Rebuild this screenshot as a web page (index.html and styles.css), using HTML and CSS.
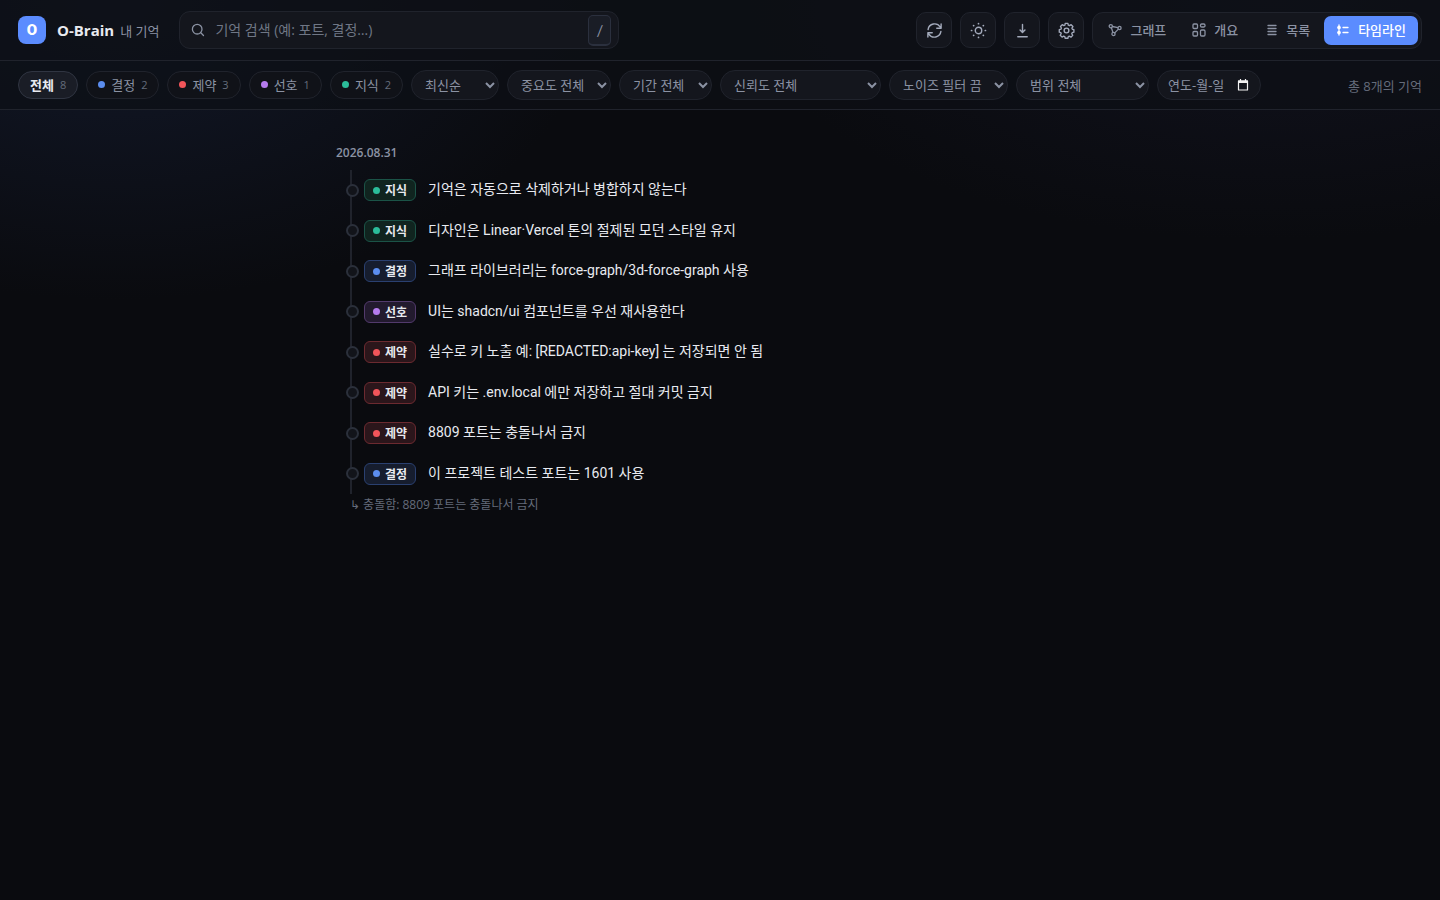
FILE: index.html
```html
<!DOCTYPE html>
<html lang="ko">
<head>
<meta charset="utf-8">
<meta name="viewport" content="width=device-width, initial-scale=1">
<title>O-Brain</title>
<link rel="stylesheet" href="styles.css">
</head>
<body>
<header class="topbar">
  <div class="brand">
    <span class="logo" aria-hidden="true">O</span>
    <h1 class="brand-name">O-Brain</h1>
    <span class="brand-sub">내 기억</span>
  </div>
  <div class="search">
    <svg class="search-icon" viewBox="0 0 14 14" aria-hidden="true"><circle cx="6.2" cy="6.2" r="4.8"/><path d="M9.800 9.800 12.500 12.500"/></svg>
    <input class="search-input" type="search" aria-label="기억 검색" placeholder="기억 검색 (예: 포트, 결정…)">
    <kbd class="key">/</kbd>
  </div>
  <div class="actions">
    <button class="icon-btn" type="button" aria-label="새로고침"><svg viewBox="0 0 18 18"><path d="M2.200 8A7 7 0 0 1 15 5.200L16 6.600M16 2v4.600h-4.600M15.800 10A7 7 0 0 1 3 12.800L2 11.400M2 16v-4.600h4.600"/></svg></button>
    <button class="icon-btn" type="button" aria-label="테마"><svg viewBox="0 0 18 18"><circle cx="9" cy="9" r="3.400"/><path class="dots" d="M9 1.600v.2M9 16.200v.2M1.600 9h.2M16.200 9h.2M3.800 3.800l.1.1M14.100 14.100l.1.1M3.800 14.200l.1-.1M14.100 3.900l.1-.1"/></svg></button>
    <button class="icon-btn" type="button" aria-label="내보내기"><svg viewBox="0 0 18 18"><path d="M9 2.600v8.400M6.400 8.600l2.600 2.600 2.600-2.600M4 15.600h10"/></svg></button>
    <button class="icon-btn" type="button" aria-label="설정"><svg viewBox="0 0 18 18"><circle cx="9" cy="9" r="2.500"/><path d="M7.500 1.700h3l.5 2.100 1.200.5 1.900-1.100 2 2.100-1.100 1.800.5 1.200 1.700.5v2.800l-1.900.5-.5 1.200 1.100 1.800-2 2-1.900-1.100-1 .4-.5 1.900h-3L7 16.400l-1.200-.5-1.800 1.100-2.100-2 1.100-1.900-.4-1.100L.9 11.600V8.700l1.900-.5.5-1.200-1.100-1.800 2-2 1.800 1.100 1.200-.5z" transform="translate(.5 -.2) scale(.95)"/></svg></button>
    <nav class="views" aria-label="보기">
      <button class="view" type="button"><svg viewBox="0 0 14 14"><circle cx="2.800" cy="3.200" r="1.600"/><circle cx="11.500" cy="5" r="1.600"/><circle cx="5.500" cy="11" r="1.600"/><path d="M4.400 3.500l5.500 1.100M3.400 4.700l1.500 4.700M10.400 6.100l-3.700 3.800"/></svg>그래프</button>
      <button class="view" type="button"><svg viewBox="0 0 14 14"><rect x="1" y="1" width="4.500" height="4.500" rx="1"/><rect x="8.500" y="1" width="4.500" height="3" rx="1.200"/><rect x="1" y="8.500" width="4.500" height="4.500" rx="1"/><rect x="8.500" y="7" width="4.500" height="6" rx="1.200"/></svg>개요</button>
      <button class="view" type="button"><svg viewBox="0 0 14 14"><path d="M4 2.500h8M4 5.500h8M4 8.500h8M4 11.500h8"/></svg>목록</button>
      <button class="view view-active" type="button" aria-current="page"><svg viewBox="0 0 14 14"><path d="M3 2v10M7 4.500h5M7 9.500h5"/><circle class="fill" cx="3" cy="4.500" r="1.200"/><circle class="fill" cx="3" cy="9.500" r="1.200"/></svg>타임라인</button>
    </nav>
  </div>
</header>

<section class="filters" aria-label="필터">
  <button class="chip chip-active" type="button">전체<span class="count">8</span></button>
  <button class="chip" type="button"><i class="dot blue"></i>결정<span class="count">2</span></button>
  <button class="chip" type="button"><i class="dot red"></i>제약<span class="count">3</span></button>
  <button class="chip" type="button"><i class="dot purple"></i>선호<span class="count">1</span></button>
  <button class="chip" type="button"><i class="dot green"></i>지식<span class="count">2</span></button>
  <select class="select w-sort" aria-label="정렬"><option>최신순</option></select>
  <select class="select w-importance" aria-label="중요도"><option>중요도 전체</option></select>
  <select class="select w-period" aria-label="기간"><option>기간 전체</option></select>
  <select class="select w-trust" aria-label="신뢰도"><option>신뢰도 전체</option></select>
  <select class="select w-noise" aria-label="노이즈 필터"><option>노이즈 필터 끔</option></select>
  <select class="select w-scope" aria-label="범위"><option>범위 전체</option></select>
  <label class="date">
    <input class="date-input" type="text" aria-label="날짜" placeholder="연도-월-일">
    <svg class="date-icon" viewBox="0 0 12 12" aria-hidden="true"><path d="M1.500 2h9v9h-9z"/><path class="date-head" d="M1 1.500h10v2.500H1z"/><path d="M3.500 0v2M8.500 0v2"/></svg>
  </label>
  <span class="total">총 8개의 기억</span>
</section>

<main class="timeline">
  <h2 class="day">2026.08.31</h2>
  <ol class="items">
    <li class="item"><span class="badge b-green"><i class="dot green"></i>지식</span><span class="title">기억은 자동으로 삭제하거나 병합하지 않는다</span></li>
    <li class="item"><span class="badge b-green"><i class="dot green"></i>지식</span><span class="title">디자인은 Linear·Vercel 톤의 절제된 모던 스타일 유지</span></li>
    <li class="item"><span class="badge b-blue"><i class="dot blue"></i>결정</span><span class="title">그래프 라이브러리는 force-graph/3d-force-graph 사용</span></li>
    <li class="item"><span class="badge b-purple"><i class="dot purple"></i>선호</span><span class="title">UI는 shadcn/ui 컴포넌트를 우선 재사용한다</span></li>
    <li class="item"><span class="badge b-red"><i class="dot red"></i>제약</span><span class="title">실수로 키 노출 예: [REDACTED:api-key] 는 저장되면 안 됨</span></li>
    <li class="item"><span class="badge b-red"><i class="dot red"></i>제약</span><span class="title">API 키는 .env.local 에만 저장하고 절대 커밋 금지</span></li>
    <li class="item"><span class="badge b-red"><i class="dot red"></i>제약</span><span class="title">8809 포트는 충돌나서 금지</span></li>
    <li class="item"><span class="badge b-blue"><i class="dot blue"></i>결정</span><span class="title">이 프로젝트 테스트 포트는 1601 사용</span></li>
  </ol>
  <p class="relation">↳ 충돌함: 8809 포트는 충돌나서 금지</p>
</main>
</body>
</html>
```

FILE: styles.css
```css
:root {
  color-scheme: dark;
  --bg: #0a0b0f;
  --panel: #14161d;
  --line: #20232c;
  --text: #e8eaf0;
  --muted: #8b92a3;
  --faint: #656c7b;
  --accent: #5b8cff;
  --blue: #5b8def;
  --red: #f2555a;
  --purple: #b57bee;
  --green: #2bbd9a;
}
*, *::before { box-sizing: border-box; }
body {
  margin: 0;
  min-height: 100vh;
  color: var(--text);
  font-family: "Open Sans", "Noto Sans CJK KR", sans-serif;
  font-size: 14px;
  background:
    radial-gradient(ellipse 480px 300px at 8% 0, #121829, transparent),
    radial-gradient(ellipse 520px 240px at 88% 0, #11121e, transparent),
    var(--bg);
}
button, input, select { font-family: inherit; }
button { cursor: pointer; }
svg { fill: none; stroke: currentColor; stroke-linecap: round; stroke-linejoin: round; flex: none; }

.topbar {
  display: flex;
  align-items: center;
  height: 61px;
  padding: 0 18px;
  border-bottom: 1px solid var(--line);
  background: rgba(13, 16, 22, 0.82);
}
.brand { display: flex; align-items: center; white-space: nowrap; }
.logo {
  display: grid;
  place-items: center;
  width: 28px;
  height: 28px;
  margin-right: 11px;
  border-radius: 8px;
  background: var(--accent);
  color: #fff;
  font-family: Roboto, sans-serif;
  font-size: 15px;
  font-weight: 900;
}
.brand-name { margin: 0 6px 0 0; font-size: 15px; font-weight: 700; }
.brand-sub { color: var(--muted); font-size: 13px; }
.search {
  display: flex;
  align-items: center;
  width: 440px;
  height: 38px;
  margin-left: 20px;
  padding: 0 7px 0 11px;
  border: 1px solid var(--line);
  border-radius: 11px;
  background: var(--panel);
}
.search-icon { width: 14px; height: 14px; color: var(--muted); stroke-width: 1.3; }
.search-input {
  flex: 1;
  min-width: 0;
  padding: 0 10px 1px;
  border: 0;
  outline: 0;
  background: none;
  color: var(--text);
  font-size: 14px;
}
.search-input::placeholder { color: #6f7685; opacity: 1; }
.key {
  display: grid;
  place-items: center;
  width: 23px;
  height: 31px;
  border: 1px solid #2b303e;
  border-bottom-width: 2px;
  border-radius: 5px;
  background: #1a1d26;
  color: var(--muted);
  font-family: Lato, sans-serif;
  font-size: 15px;
}
.actions { display: flex; align-items: center; gap: 8px; margin-left: auto; }
.icon-btn {
  display: grid;
  place-items: center;
  width: 36px;
  height: 36px;
  padding: 0;
  border: 1px solid var(--line);
  border-radius: 10px;
  background: var(--panel);
  color: #a3aabb;
}
.icon-btn svg { width: 17px; height: 17px; stroke-width: 1.5; }
.icon-btn .dots { stroke-width: 1.8; }
.views {
  display: flex;
  gap: 2px;
  padding: 3px;
  border: 1px solid var(--line);
  border-radius: 11px;
  background: var(--panel);
}
.view {
  display: flex;
  align-items: center;
  gap: 8px;
  height: 29px;
  padding: 0 12px 1px;
  border: 0;
  border-radius: 7px;
  background: none;
  color: var(--muted);
  font-size: 13px;
  font-weight: 500;
  white-space: nowrap;
}
.view svg { width: 14px; height: 14px; stroke-width: 1.3; }
.view .fill { fill: currentColor; }
.view-active { background: var(--accent); color: #fff; }

.filters {
  display: flex;
  align-items: center;
  gap: 8px;
  min-height: 49px;
  padding: 0 18px;
  border-bottom: 1px solid var(--line);
  background: rgba(13, 16, 22, 0.7);
  white-space: nowrap;
}
.chip {
  display: flex;
  align-items: center;
  gap: 6px;
  height: 28px;
  padding: 0 11px 1px;
  border: 1px solid var(--line);
  border-radius: 14px;
  background: #101218;
  color: var(--muted);
  font-size: 13px;
}
.chip-active { border-color: #303542; background: #1a1d26; color: var(--text); font-weight: 600; }
.count { color: var(--faint); font-size: 11px; font-weight: 400; }
.dot { flex: none; width: 7px; height: 7px; border-radius: 50%; }
.blue { background: var(--blue); }
.red { background: var(--red); }
.purple { background: var(--purple); }
.green { background: var(--green); }
.select, .date {
  height: 30px;
  border: 1px solid var(--line);
  border-radius: 15px;
  background-color: var(--panel);
  color: var(--muted);
  font-size: 13px;
}
.select { padding: 0 0 0 9px; }
.w-sort { width: 88px; }
.w-importance { width: 104px; }
.w-period { width: 93px; }
.w-trust { width: 161px; }
.w-noise { width: 119px; }
.w-scope { width: 133px; }
.date { display: flex; align-items: center; gap: 6px; width: 104px; padding: 0 11px 0 10px; }
.date-input {
  flex: 1;
  min-width: 0;
  padding: 0;
  border: 0;
  outline: 0;
  background: none;
  color: var(--muted);
  font-size: 13px;
}
.date-input::placeholder { color: var(--muted); opacity: 1; }
.date-icon { width: 12px; height: 12px; color: #f2f2f2; stroke-width: 1.2; }
.date-head { fill: currentColor; stroke: none; }
.total { margin-left: auto; color: var(--faint); font-size: 13px; }

.timeline { max-width: 768px; margin: 0 auto; padding: 34px 0; }
.day { margin: 0; color: var(--muted); font-size: 12px; font-weight: 600; line-height: 18px; }
.items {
  display: flex;
  flex-direction: column;
  justify-content: space-between;
  min-height: 324px;
  margin: 8px 0 0 14px;
  padding: 0;
  border-left: 2px solid var(--line);
  list-style: none;
}
.item { position: relative; display: flex; align-items: center; gap: 12px; min-height: 40px; padding-left: 12px; }
.item::before {
  content: "";
  position: absolute;
  left: -6px;
  width: 13px;
  height: 13px;
  border: 2px solid #2b303b;
  border-radius: 50%;
  background: #12141a;
}
.badge {
  display: flex;
  align-items: center;
  gap: 5px;
  height: 22px;
  padding: 0 8px;
  border: 1px solid;
  border-radius: 6px;
  font-size: 12px;
  font-weight: 700;
  white-space: nowrap;
}
.b-green { border-color: #1b5347; background: #10241f; }
.b-blue { border-color: #2a4070; background: #161d2e; }
.b-purple { border-color: #523a6c; background: #221a2e; }
.b-red { border-color: #6c2a30; background: #2b161b; }
.title {
  padding-bottom: 2px;
  font-family: Roboto, "Noto Sans CJK KR", sans-serif;
  font-size: 14px;
  font-weight: 400;
  line-height: 22px;
}
.relation { margin: 2px 0 0 14px; color: var(--faint); font-size: 12px; line-height: 18px; }
```
